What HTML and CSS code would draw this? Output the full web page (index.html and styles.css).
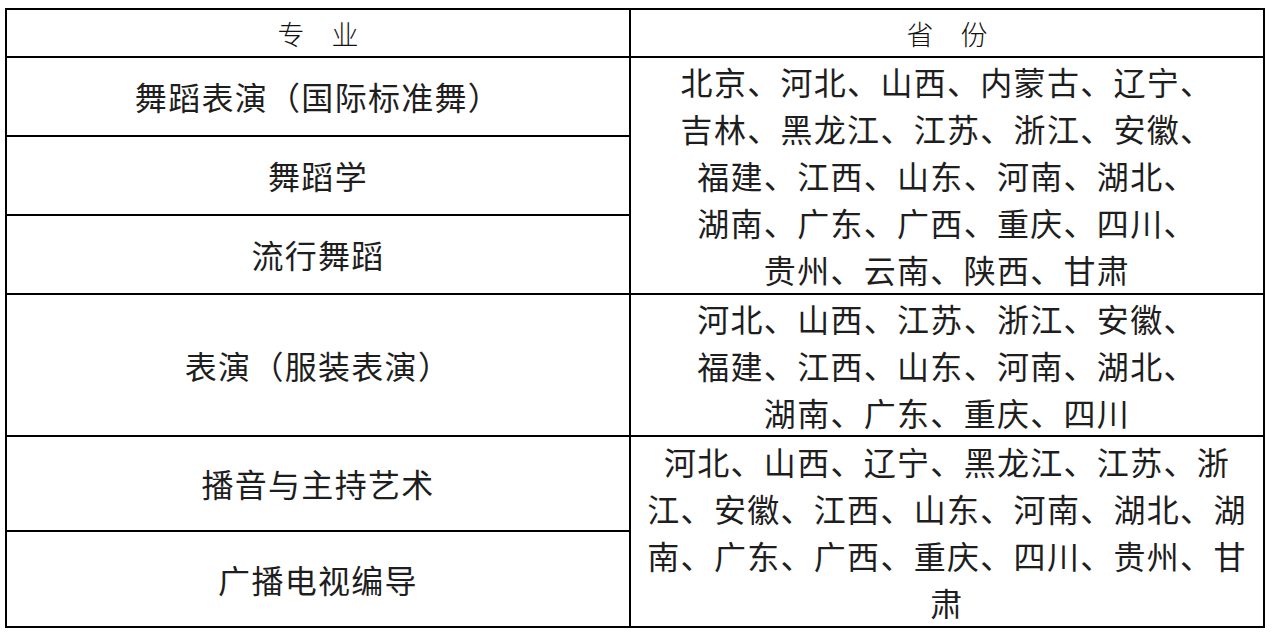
FILE: index.html
```html
<!DOCTYPE html>
<html lang="zh-CN">
<head>
<meta charset="utf-8">
<title>专业省份</title>
<link rel="stylesheet" href="styles.css">
</head>
<body>
<div class="sheet">
  <div class="grid">
    <div class="cell head">专　业</div>
    <div class="cell head">省　份</div>

    <div class="cell major r1">舞蹈表演（国际标准舞）</div>
    <div class="cell prov b1">北京、河北、山西、内蒙古、辽宁、<br>吉林、黑龙江、江苏、浙江、安徽、<br>福建、江西、山东、河南、湖北、<br>湖南、广东、广西、重庆、四川、<br>贵州、云南、陕西、甘肃</div>
    <div class="cell major r2">舞蹈学</div>
    <div class="cell major r3">流行舞蹈</div>

    <div class="cell major r4">表演（服装表演）</div>
    <div class="cell prov b2">河北、山西、江苏、浙江、安徽、<br>福建、江西、山东、河南、湖北、<br>湖南、广东、重庆、四川</div>

    <div class="cell major r5">播音与主持艺术</div>
    <div class="cell prov b3">河北、山西、辽宁、黑龙江、江苏、浙<br>江、安徽、江西、山东、河南、湖北、湖<br>南、广东、广西、重庆、四川、贵州、甘<br>肃</div>
    <div class="cell major r6">广播电视编导</div>
  </div>
</div>
</body>
</html>
```

FILE: styles.css
```css
html, body {
  margin: 0;
  padding: 0;
  background: #ffffff;
}

.sheet {
  padding: 8px 0 0 5px;
}

.grid {
  display: grid;
  grid-template-columns: 624px 634px;
  grid-template-rows: 48px 79px 79px 79px 142px 95px 96px;
  width: 1258px;
  border-top: 2px solid #000;
  border-left: 2px solid #000;
  color: #1e1e1e;
  font-family: "Noto Sans CJK SC", "Noto Sans", sans-serif;
}

.cell {
  box-sizing: border-box;
  border-right: 2px solid #000;
  border-bottom: 2px solid #000;
  display: flex;
  align-items: center;
  justify-content: center;
  text-align: center;
  font-size: 32px;
  line-height: 47px;
  letter-spacing: 1.3px;
  white-space: nowrap;
}

.head {
  font-size: 27px;
  font-weight: 300;
  letter-spacing: 0;
  color: #111;
  line-height: 32px;
  padding-top: 2px;
}

.major { grid-column: 1; }
.prov { grid-column: 2; }

.r1 { grid-row: 2; }
.r2 { grid-row: 3; }
.r3 { grid-row: 4; }
.r4 { grid-row: 5; }
.r5 { grid-row: 6; }
.r6 { grid-row: 7; }

.b1 { grid-row: 2 / span 3; }
.b2 { grid-row: 5; }
.b3 { grid-row: 6 / span 2; }
```
